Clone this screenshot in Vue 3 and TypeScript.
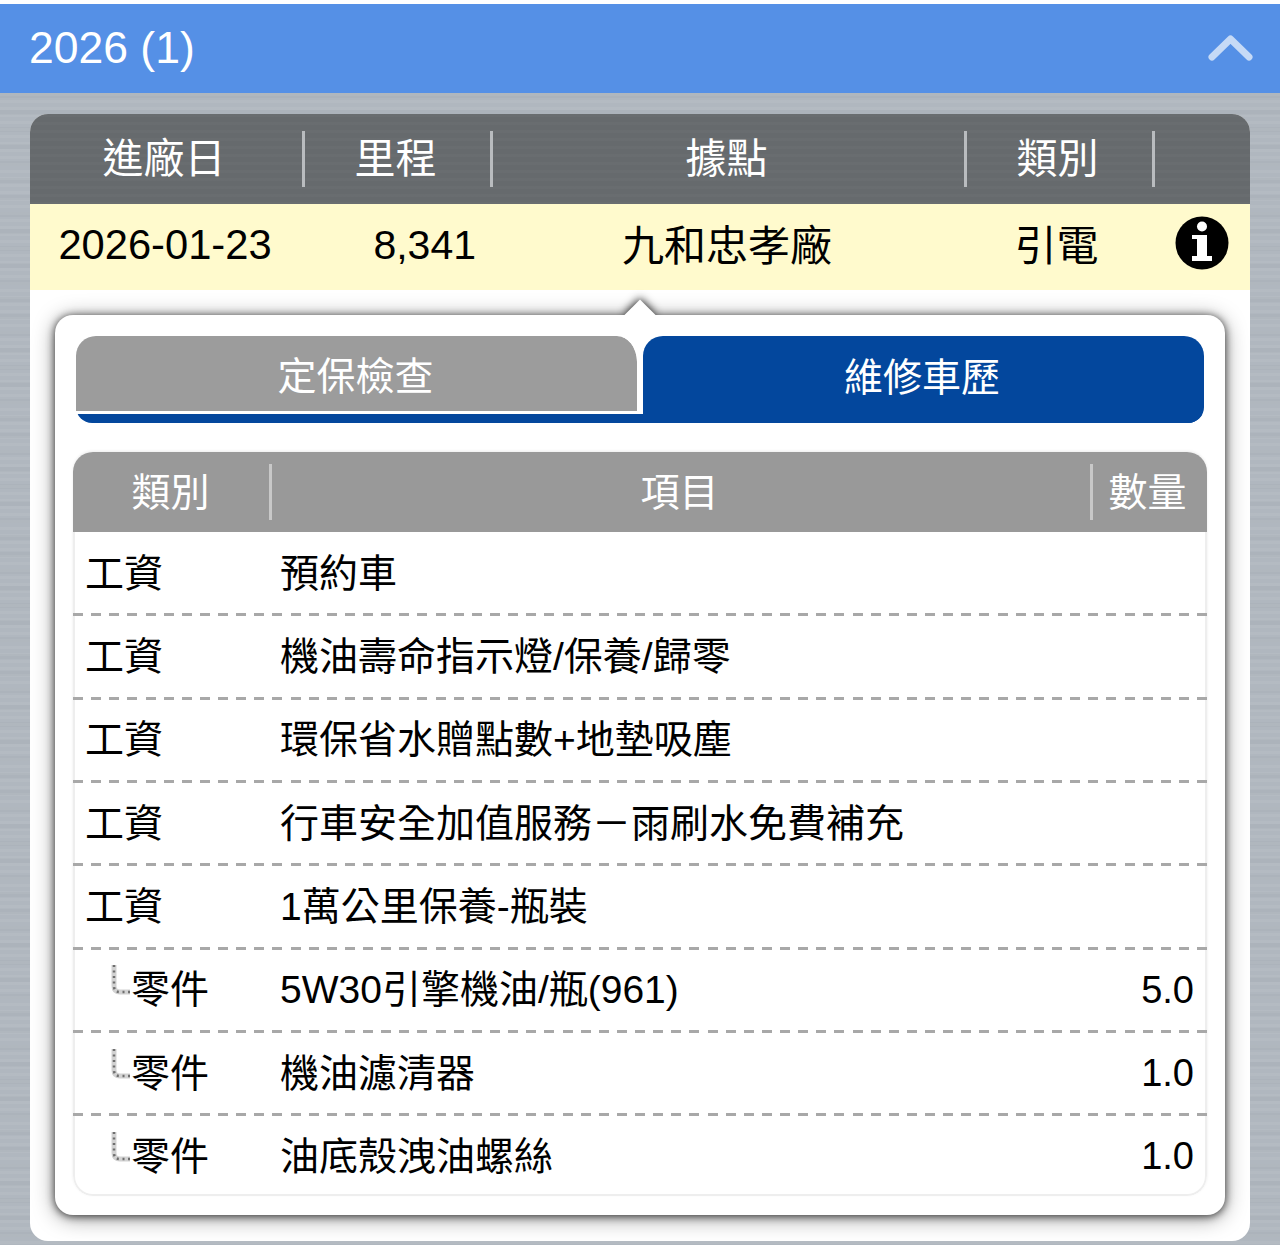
<script setup lang="ts">
interface Row { type: string; name: string; qty: string; child: boolean }
const rows: Row[] = [
  { type: '工資', name: '預約車', qty: '', child: false },
  { type: '工資', name: '機油壽命指示燈/保養/歸零', qty: '', child: false },
  { type: '工資', name: '環保省水贈點數+地墊吸塵', qty: '', child: false },
  { type: '工資', name: '行車安全加值服務－雨刷水免費補充', qty: '', child: false },
  { type: '工資', name: '1萬公里保養-瓶裝', qty: '', child: false },
  { type: '零件', name: '5W30引擎機油/瓶(961)', qty: '5.0', child: true },
  { type: '零件', name: '機油濾清器', qty: '1.0', child: true },
  { type: '零件', name: '油底殼洩油螺絲', qty: '1.0', child: true },
]
</script>

<template>
  <div class="page">
    <header class="bar">
      <span class="year">2026 (1)</span>
      <svg class="chev" width="46" height="28" viewBox="0 0 46 28">
        <path d="M4 24 L22.500 6 L41 24" fill="none" stroke="#c6daf6" stroke-width="7" stroke-linecap="round" stroke-linejoin="round" />
      </svg>
    </header>
    <main class="body">
      <section class="card">
        <div class="cols head">
          <div class="hc">進廠日</div>
          <div class="hc">里程</div>
          <div class="hc">據點</div>
          <div class="hc">類別</div>
          <div></div>
        </div>
        <div class="cols summary">
          <div class="date">2026-01-23</div>
          <div class="km">8,341</div>
          <div class="site">九和忠孝廠</div>
          <div class="site second">引電</div>
          <div class="info">
            <svg width="54" height="54" viewBox="0 0 54 54">
              <circle cx="27" cy="27" r="26.500" fill="#000" />
              <circle cx="27" cy="10.500" r="5" fill="#fff" />
              <path d="M17 19 H32 V40 H37 V45 H17 V40 H22 V23 H17 Z" fill="#fff" />
            </svg>
          </div>
        </div>
        <div class="panel-wrap">
          <div class="panel">
            <span class="arrow"></span>
            <div class="tabs">
              <div class="tab off">定保檢查</div>
              <div class="tab on">維修車歷</div>
            </div>
            <div class="table">
              <div class="thead">
                <div class="th sep">類別</div>
                <div class="th sep">項目</div>
                <div class="th last-th">數量</div>
              </div>
              <div class="tbody">
                <div v-for="(r, i) in rows" :key="i" class="item" :class="{ last: i === rows.length - 1 }">
                  <div class="type">
                    <svg v-if="r.child" class="link" width="20" height="32" viewBox="0 0 20 32">
                      <path d="M3 2 V23 Q3 29 9 29 H19" fill="none" stroke="#d2d2d2" stroke-width="5" />
                      <path d="M3 2 V23 Q3 29 9 29 H19" fill="none" stroke="#6f6f6f" stroke-width="2.500" stroke-dasharray="2 3.500" />
                    </svg>
                    <span>{{ r.type }}</span>
                  </div>
                  <div class="name">{{ r.name }}</div>
                  <div class="qty">{{ r.qty }}</div>
                </div>
              </div>
            </div>
          </div>
        </div>
      </section>
    </main>
  </div>
</template>

<style scoped>
.page {
  width: 1280px;
  height: 1245px;
  padding-top: 4px;
  box-sizing: border-box;
  display: flex;
  flex-direction: column;
  overflow: hidden;
  background: #fff;
  font-family: "Liberation Sans", "Noto Sans CJK TC", sans-serif;
  color: #000;
}
.bar {
  height: 89px;
  flex: none;
  background: #5590e6;
  display: flex;
  align-items: center;
  justify-content: space-between;
  padding: 0 26px 0 29px;
}
.year {
  color: #fff;
  font-size: 44.500px;
  margin-bottom: 2px;
}
.chev {
  margin-bottom: 4px;
}
.body {
  flex: 1;
  padding: 21px 30px 0;
  background-color: #b0b7bf;
  background-image:
    repeating-linear-gradient(180deg, rgba(255, 255, 255, 0.05) 0 3px, transparent 3px 7px),
    repeating-linear-gradient(180deg, rgba(0, 0, 0, 0.025) 0 5px, transparent 5px 17px);
}
.card {
  height: 1127px;
  border-radius: 18px;
  overflow: hidden;
  background: #fff;
  display: flex;
  flex-direction: column;
}
.cols {
  display: grid;
  grid-template-columns: 275px 188px 474px 188px 95px;
  align-items: center;
  text-align: center;
  flex: none;
}
.head {
  height: 90px;
  color: #fff;
  font-size: 41px;
  background-color: #666a6d;
  background-image: repeating-linear-gradient(180deg, rgba(255, 255, 255, 0.02) 0 3px, transparent 3px 8px);
}
.hc {
  height: 56px;
  line-height: 57px;
  border-right: 3px solid #b9bcbf;
  padding-right: 4px;
}
.summary {
  height: 86px;
  background: #fffacd;
  font-size: 42px;
}
.date {
  font-size: 41.700px;
  padding-right: 5px;
  margin-bottom: 4px;
}
.km {
  text-align: right;
  padding-right: 17px;
  font-size: 41px;
  margin-bottom: 4px;
}
.site {
  padding-right: 6px;
  margin-bottom: 10px;
}
.second {
  padding-right: 9px;
}
.info {
  display: flex;
  justify-content: flex-start;
  padding-left: 20px;
  margin-top: -8px;
}
.panel-wrap {
  flex: 1;
  padding: 25px 25px 25px;
  min-height: 0;
}
.panel {
  position: relative;
  height: 900px;
  box-sizing: border-box;
  padding: 21px 18px 0;
  background: #fff;
  border-radius: 18px;
  box-shadow: 0 1px 8px rgba(0, 0, 0, 0.75), 0 3px 22px rgba(0, 0, 0, 0.4);
}
.arrow {
  position: absolute;
  left: 574px;
  top: -11px;
  width: 22px;
  height: 22px;
  background: #fff;
  transform: rotate(45deg);
  box-shadow: -1px -1px 9px rgba(0, 0, 0, 0.85);
  clip-path: polygon(-100% 200%, 200% -100%, -100% -100%);
}
.tabs {
  display: flex;
  height: 87px;
  margin: 0 3px;
  border-radius: 0 0 16px 16px;
  background: linear-gradient(to top, #03479d 9px, transparent 9px);
  position: relative;
}
.tab {
  display: flex;
  align-items: center;
  justify-content: center;
  color: #fff;
  font-size: 39px;
}
.off {
  width: 567px;
  height: 78px;
  box-sizing: border-box;
  padding: 0 2px 2px 0;
  background-color: #9c9c9c;
  background-clip: padding-box;
  border-right: 6px solid #fff;
  border-bottom: 3px solid #fff;
  border-radius: 20px 26px 0 0;
}
.on {
  flex: 1;
  padding: 0 3px 12px 0;
  background: #03479d;
  border-radius: 20px 20px 16px 0;
}
.table {
  margin-top: 29px;
  height: 744px;
  border-radius: 20px;
  overflow: hidden;
  box-shadow: 0 -1px 3px rgba(0, 0, 0, 0.08);
  display: flex;
  flex-direction: column;
}
.thead {
  height: 80px;
  flex: none;
  display: grid;
  grid-template-columns: 199px 821px 114px;
  align-items: center;
  text-align: center;
  background: #999;
  color: #fff;
  font-size: 39px;
}
.th {
  height: 56px;
  line-height: 58px;
}
.sep {
  border-right: 3px solid #c8c8c8;
  padding-right: 1px;
}
.sep + .sep {
  padding-right: 3px;
}
.last-th {
  padding-right: 5px;
}
.tbody {
  flex: 1;
  min-height: 0;
  padding-top: 1px;
  border: 2px solid #eee;
  border-top: none;
  border-radius: 0 0 20px 20px;
}
.item {
  display: grid;
  grid-template-columns: 198px 818px 114px;
  height: 83.330px;
  box-sizing: border-box;
  margin: 0 -2px;
  padding: 0 2px 10px;
  align-items: center;
  font-size: 39px;
  background: repeating-linear-gradient(90deg, #a8a8a8 0 10px, transparent 10px 18.130px) left bottom / 100% 3px no-repeat;
}
.item.last {
  background: none;
}
.type {
  display: flex;
  align-items: center;
  padding-left: 10px;
}
.link {
  flex: none;
  margin: 0 0 14px 26px;
}
.name {
  padding-left: 7px;
  white-space: nowrap;
}
.qty {
  text-align: right;
  padding-right: 11px;
  font-size: 38px;
  margin-top: 8px;
}
</style>
